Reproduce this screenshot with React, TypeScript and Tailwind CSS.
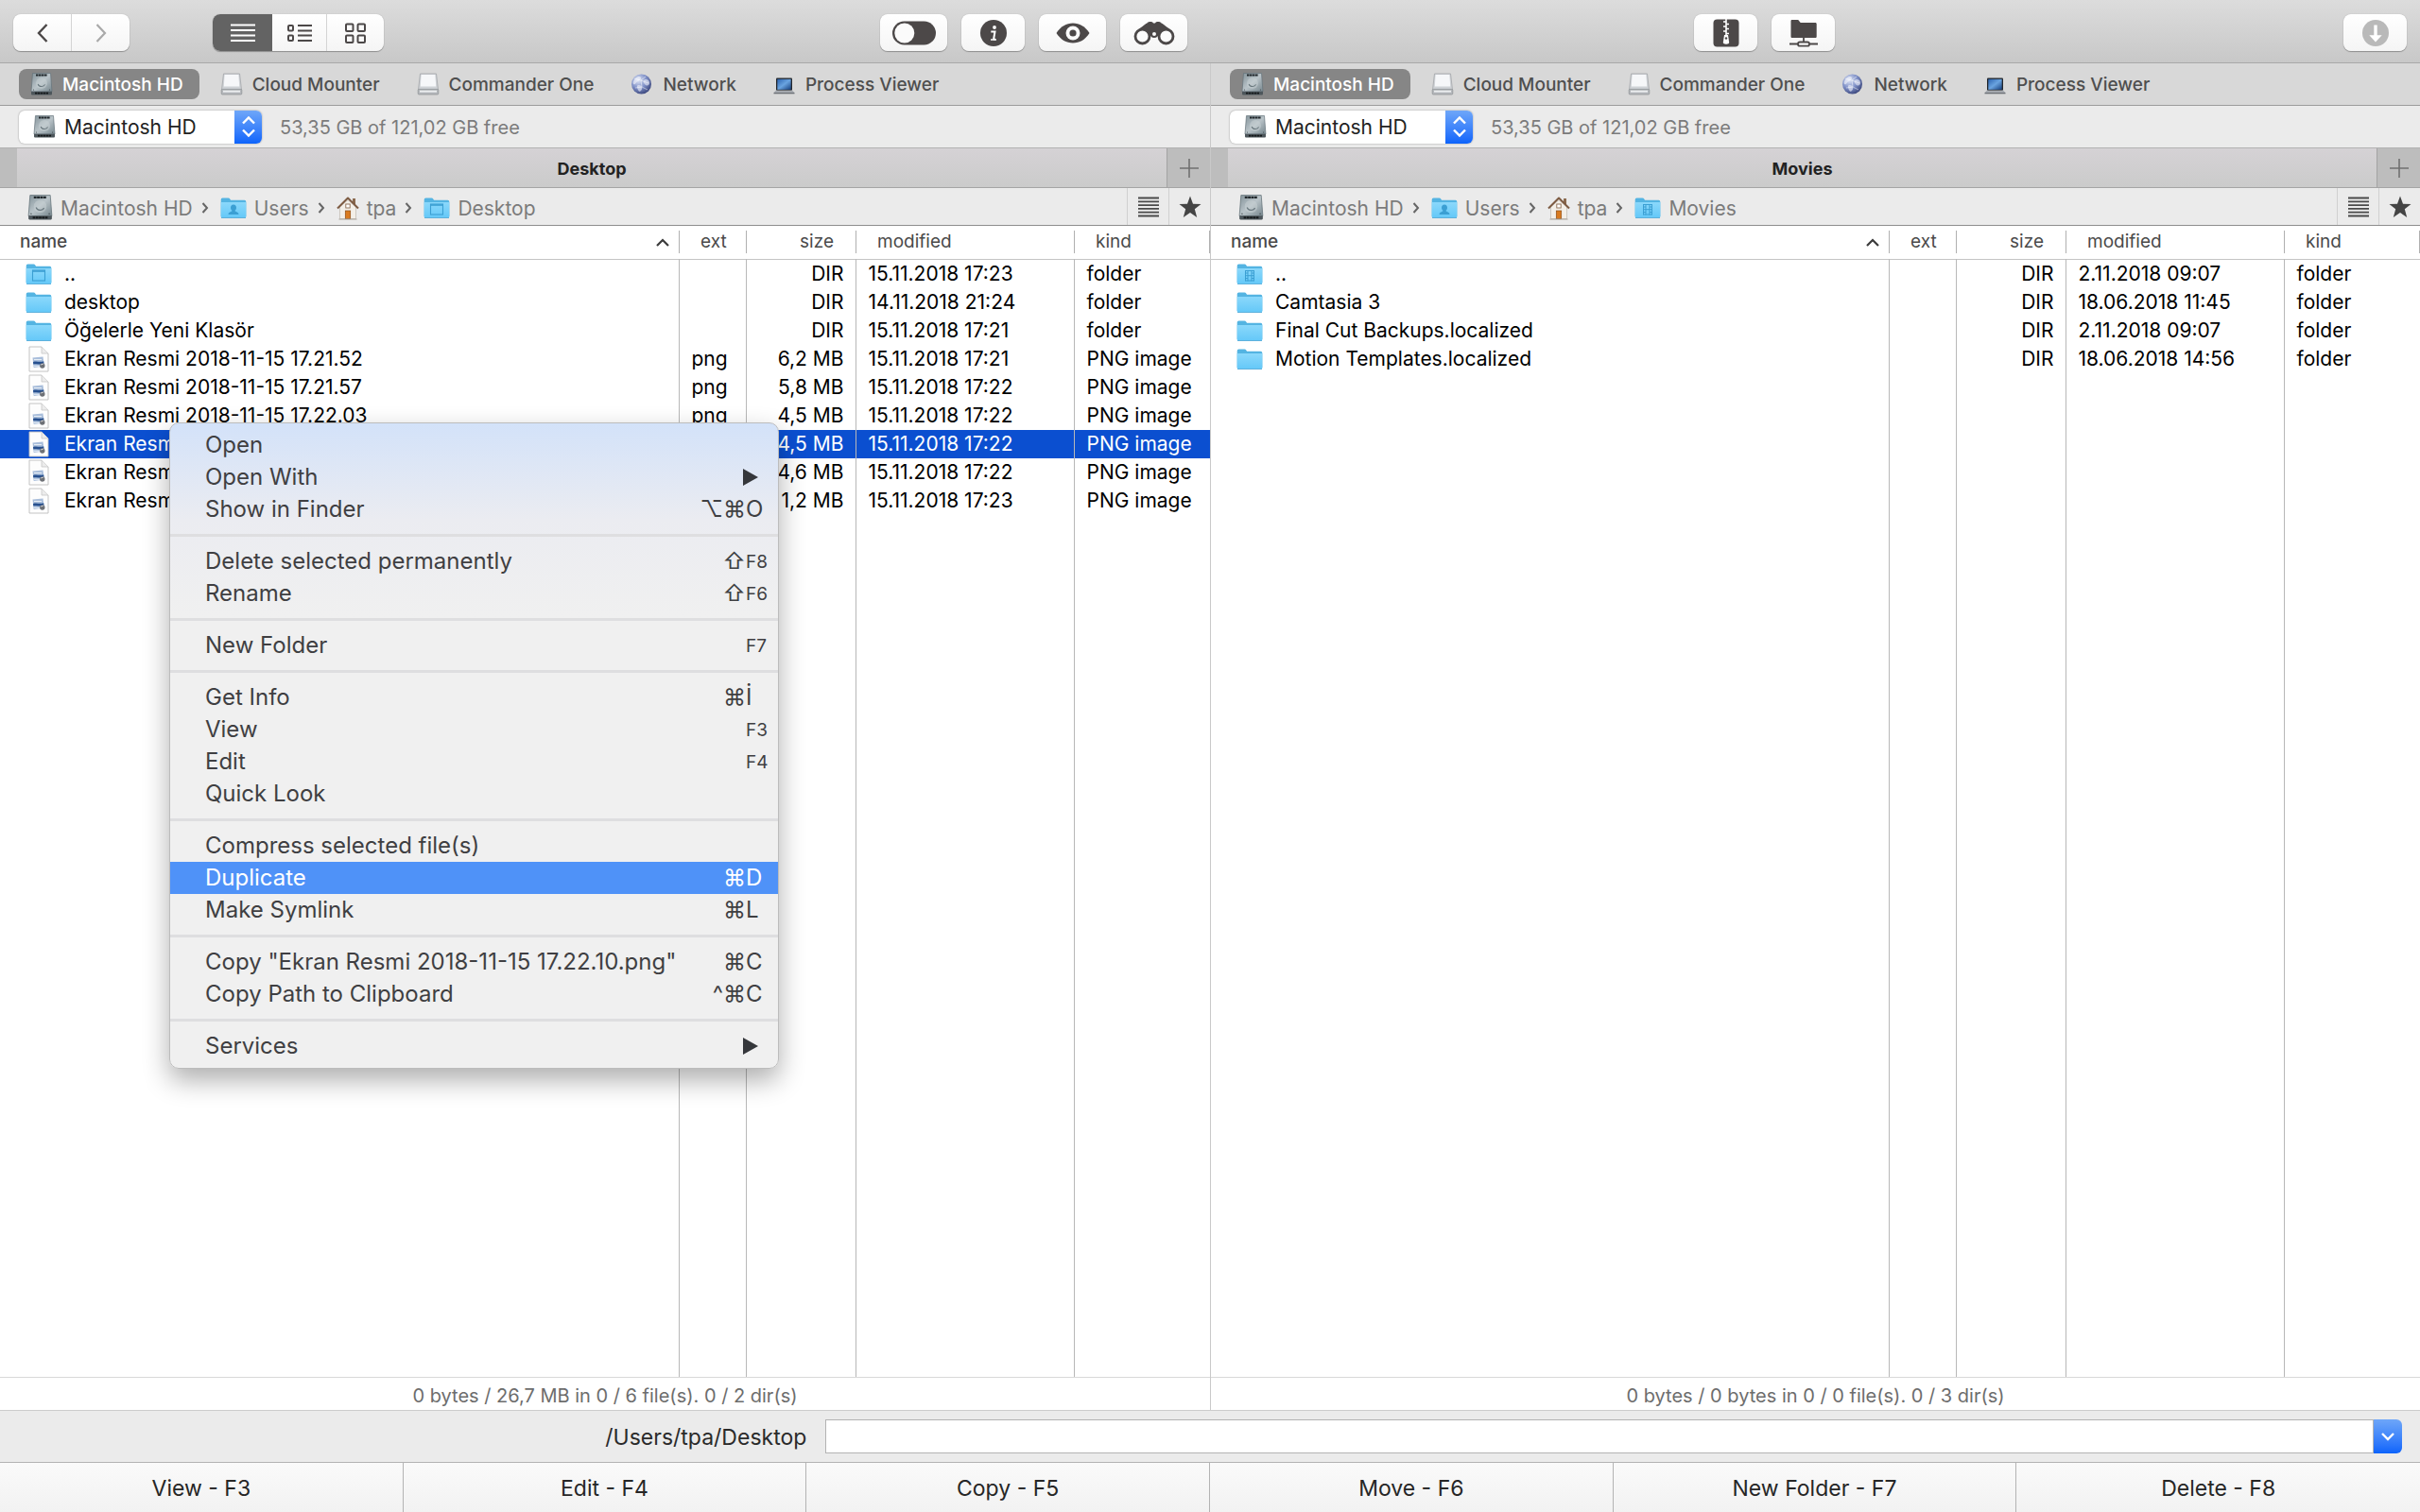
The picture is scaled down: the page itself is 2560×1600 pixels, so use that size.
import { ReactNode } from "react";
import clsx from "clsx";

type FolderKind = "plain" | "user" | "desktop" | "movies";

interface FileRow {
  name: string;
  icon: FolderKind | "png";
  size: string;
  modified: string;
  selected?: boolean;
}

interface Crumb {
  label: string;
  icon: ReactNode;
}

interface MenuEntry {
  label: string;
  mods?: string;
  keyLabel?: string;
  submenu?: boolean;
  active?: boolean;
}

/* ---------- icons ---------- */

const HardDriveIcon = ({ className = "w-6 h-6" }: { className?: string }) => (
  <svg viewBox="0 0 24 24" className={clsx("shrink-0", className)} aria-hidden="true">
    <defs>
      <linearGradient id="hd" x1="0" y1="0" x2="1" y2="1">
        <stop offset="0" stopColor="#84939a" />
        <stop offset="0.5" stopColor="#b9c3c8" />
        <stop offset="1" stopColor="#76868d" />
      </linearGradient>
    </defs>
    <path d="M2.500.5h19L23 20H1z" fill="url(#hd)" stroke="#66747b" strokeWidth="0.7" />
    <path d="M1 19.800h22V22.500a1 1 0 0 1-1 1H2a1 1 0 0 1-1-1z" fill="#4d565b" />
    <path d="M5 21.600h14" stroke="#15191b" strokeWidth="1.800" strokeDasharray="2.400 0.500" />
    <path d="M6 2.600h12" stroke="#20272b" strokeWidth="2" strokeDasharray="2.600 0.400" />
    <circle cx="12" cy="11" r="6" fill="#ccd4d7" opacity="0.45" />
    <path d="M8.200 12c.8 3 6 3.600 7.400.4" fill="none" stroke="#6c7a80" strokeWidth="1.100" />
    <circle cx="3.500" cy="18" r="0.600" fill="#3b4448" />
    <circle cx="20.500" cy="18" r="0.600" fill="#3b4448" />
  </svg>
);

const ExternalDriveIcon = () => (
  <svg viewBox="0 0 24 24" className="w-6 h-6 shrink-0" aria-hidden="true">
    <path d="M3.500 1h17L22.500 18h-21z" fill="#cfd2d6" stroke="#a3a6aa" strokeWidth="0.8" />
    <path d="M4.600 2h14.800l.8 12.500H3.800z" fill="#f6f7f9" />
    <rect x="1.200" y="17.400" width="21.600" height="5.600" rx="1" fill="#b4b7bb" stroke="#8d9094" strokeWidth="0.7" />
    <rect x="3" y="18.800" width="18" height="1.800" fill="#eceef0" />
  </svg>
);

const GlobeIcon = () => (
  <svg viewBox="0 0 24 24" className="w-6 h-6 shrink-0" aria-hidden="true">
    <defs>
      <radialGradient id="globe" cx="0.35" cy="0.3" r="0.8">
        <stop offset="0" stopColor="#dfe6f5" />
        <stop offset="0.5" stopColor="#8091c8" />
        <stop offset="1" stopColor="#2f3a70" />
      </radialGradient>
    </defs>
    <circle cx="11.500" cy="12" r="10.500" fill="url(#globe)" />
    <path
      d="M7 4.500c3-1.500 5 .5 3.600 2.400C9.400 8.500 6.500 9 5.600 11c-.9 2-2.600 1.500-3 0C3 8 5 5.500 7 4.500zM14 8c2-2 5.500-.5 6 2s-1.500 4-3 3.500-4.500-3.500-3-5.500zM8 13c2.500-.5 4.500 1.500 4.200 3.500S10 20.500 9 19.500 5.500 14 8 13z"
      fill="#f1f4fc"
      opacity="0.6"
    />
    <path d="M4 6l7 2 5-4M11 8l1 7 6 3M12 15l-7 1M11 8l8 3" fill="none" stroke="#fff" strokeWidth="0.6" opacity="0.8" />
  </svg>
);

const LaptopIcon = () => (
  <svg viewBox="0 0 24 24" className="w-6 h-6 shrink-0" aria-hidden="true">
    <defs>
      <linearGradient id="screen" x1="0" y1="0" x2="1" y2="1">
        <stop offset="0" stopColor="#2b63b0" />
        <stop offset="0.5" stopColor="#6aa4e0" />
        <stop offset="1" stopColor="#16407f" />
      </linearGradient>
    </defs>
    <rect x="3" y="5.500" width="17" height="13.500" rx="1" fill="#23262b" />
    <rect x="4.300" y="6.800" width="14.400" height="11" fill="url(#screen)" />
    <path d="M3 18.500h17l2.500 2.500H.5z" fill="#a4a8ae" />
    <path d="M.5 21h22v1.300H.5z" fill="#6d7177" />
  </svg>
);

const FolderIcon = ({ kind, className = "w-7 h-6" }: { kind: FolderKind; className?: string }) => (
  <svg viewBox="0 0 28 24" className={clsx("shrink-0", className)} aria-hidden="true">
    <defs>
      <linearGradient id="folder" x1="0" y1="0" x2="0" y2="1">
        <stop offset="0" stopColor="#8bd8fb" />
        <stop offset="1" stopColor="#64c8f8" />
      </linearGradient>
    </defs>
    <path
      d="M.7 3.200A1.700 1.700 0 0 1 2.400 1.500h6.200c.8 0 1.200.3 1.600.9l.9 1.300h14.500a1.700 1.700 0 0 1 1.700 1.700V21H.7z"
      fill="#54b4e2"
    />
    <path d="M.7 6h26.600v15.300a1.200 1.200 0 0 1-1.200 1.200H1.900a1.200 1.200 0 0 1-1.200-1.200z" fill="url(#folder)" />
    <path d="M1 22.500h26" stroke="#4aa5d4" strokeWidth="0.800" />
    {kind === "desktop" && (
      <>
        <rect x="7.500" y="8" width="13" height="11" fill="none" stroke="#3b9fd3" strokeWidth="1.100" />
        <path d="M7.500 9h13" stroke="#3b9fd3" strokeWidth="1.600" />
      </>
    )}
    {kind === "user" && (
      <path
        d="M14 8.500c1.900 0 3 1.400 3 3.200 0 1.300-.6 2.300-1.300 2.900v1c1.500.7 3.800 1.200 3.800 3.400h-11c0-2.200 2.300-2.700 3.800-3.400v-1c-.7-.6-1.300-1.600-1.300-2.900 0-1.800 1.100-3.200 3-3.200z"
        fill="#3b9fd3"
      />
    )}
    {kind === "movies" && (
      <path
        d="M9.500 8v11.500M18.500 8v11.500M12 8v11.500M16 8v11.500M9.500 8.500h9M9.500 11h2.500M16 11h2.500M9.500 13.700h9M9.500 16.500h2.500M16 16.500h2.500M9.500 19h9"
        fill="none"
        stroke="#3b9fd3"
        strokeWidth="1"
      />
    )}
  </svg>
);

const HomeIcon = () => (
  <svg viewBox="0 0 24 26" className="w-6 h-[26px] shrink-0" aria-hidden="true">
    <path d="M17 3h3v6h-3z" fill="#8a6a4f" />
    <path d="M3.500 12L12 4.500 20.500 12v12.500h-17z" fill="#f3efe8" stroke="#b6aea4" strokeWidth="0.600" />
    <path d="M1 13.500L12 2.500 23 13.500" fill="none" stroke="#7d5b42" strokeWidth="2" strokeLinejoin="round" />
    <rect x="9.300" y="16" width="5.400" height="8.500" fill="#d97a1e" stroke="#8c4d13" strokeWidth="0.700" />
    <rect x="9.800" y="9" width="4.400" height="4" fill="#fff" stroke="#8c6a50" strokeWidth="0.900" />
    <path d="M2.500 25h19" stroke="#a9a39a" strokeWidth="1" />
  </svg>
);

const PngIcon = () => (
  <svg viewBox="0 0 22 28" className="w-[22px] h-7 shrink-0" aria-hidden="true">
    <path d="M1 1h13l7 7v19H1z" fill="#fdfdfd" stroke="#bdbdbd" strokeWidth="0.900" />
    <path d="M14 1v7h7" fill="#ececec" stroke="#c6c6c6" strokeWidth="0.800" />
    <path d="M4.500 12.500l11-1 1.200 10-11 1.500z" fill="#a9bedb" />
    <path d="M5 17c4-1.500 7 .8 11.200-.8l.3 2.600c-4 1.800-7-.5-11.200.8z" fill="#27508f" />
    <path d="M6 14.500h8M6 21.300h6" stroke="#e6edf5" strokeWidth="1" />
    <circle cx="14.800" cy="21" r="2.700" fill="#6e7176" />
    <path d="M13 20l3-1" stroke="#d5d6d8" strokeWidth="0.900" />
  </svg>
);

/* ---------- toolbar ---------- */

const INK = "#4c4848";

const ToggleIcon = () => (
  <svg viewBox="0 0 46 26" className="w-[46px] h-[26px]" aria-hidden="true">
    <rect x="0" y="0.500" width="46" height="25" rx="12.500" fill={INK} />
    <circle cx="12.800" cy="13" r="10.500" fill="#fbfbfb" />
  </svg>
);

const InfoIcon = () => (
  <svg viewBox="0 0 28 28" className="w-7 h-7" aria-hidden="true">
    <circle cx="14" cy="14" r="14" fill={INK} />
    <circle cx="15" cy="8" r="1.900" fill="#fff" />
    <path d="M11.300 12.400h4.200l-1.300 7.500c-.1.700.3.900 1.700.5" fill="none" stroke="#fff" strokeWidth="2" />
    <path d="M11 21h6" stroke="#fff" strokeWidth="1.500" />
  </svg>
);

const EyeIcon = () => (
  <svg viewBox="0 0 36 22" className="w-9 h-[22px]" aria-hidden="true">
    <path d="M.5 11C5 4 11 .5 18 .5S31 4 35.500 11C31 18 25 21.500 18 21.500S5 18 .5 11z" fill={INK} />
    <circle cx="18" cy="11" r="7.500" fill="#fbfbfb" />
    <circle cx="18" cy="11" r="3.600" fill={INK} />
  </svg>
);

const BinocularsIcon = () => (
  <svg viewBox="0 0 44 26" className="w-11 h-[26px]" aria-hidden="true">
    <path
      d="M9.500 6C11 4.500 13 3 14.500 2.500 15 .9 20 .3 21 2.500h2C24 .3 29 .9 29.500 2.500 31 3 33 4.500 34.500 6c3 2 5.500 4.500 7.500 8L30 17l-5-1h-6l-5 1L2 14c2-3.500 4.500-6 7.500-8z"
      fill={INK}
    />
    <circle cx="9.500" cy="16.500" r="7.500" fill="#fbfbfb" stroke={INK} strokeWidth="2.800" />
    <circle cx="34.500" cy="16.500" r="7.500" fill="#fbfbfb" stroke={INK} strokeWidth="2.800" />
    <circle cx="22" cy="14" r="3" fill="#fbfbfb" stroke={INK} strokeWidth="2" />
  </svg>
);

const ZipIcon = () => (
  <svg viewBox="0 0 28 30" className="w-7 h-[30px]" aria-hidden="true">
    <rect x="0.500" y="0.500" width="27" height="29" rx="4" fill={INK} />
    <path d="M14 0v17" stroke="#fff" strokeWidth="1.600" />
    <path d="M11 3h3M14 5.500h3M11 8h3M14 10.500h3M11 13h3M14 15.500h3" stroke="#fff" strokeWidth="1.500" />
    <path d="M12 17h4l1.200 8c0 2.300-6.400 2.300-6.400 0z" fill="#fff" />
    <circle cx="14" cy="20.500" r="1.200" fill={INK} />
  </svg>
);

const NetworkFolderIcon = () => (
  <svg viewBox="0 0 30 30" className="w-[30px] h-[30px]" aria-hidden="true">
    <path d="M1.500 2.200C1.500 1.300 2 1 2.800 1h6.400l2.500 3h15.500c1 0 1.500.5 1.500 1.500v13c0 1-.5 1.500-1.500 1.500H3c-1 0-1.500-.5-1.500-1.500z" fill={INK} />
    <path d="M15 20v4.500M0 26.500h9.500M20.500 26.500H30" stroke={INK} strokeWidth="1.800" />
    <rect x="9" y="24.500" width="12" height="4.200" rx="2" fill="none" stroke={INK} strokeWidth="1.800" />
  </svg>
);

const DownloadIcon = () => (
  <svg viewBox="0 0 28 28" className="w-7 h-7" aria-hidden="true">
    <circle cx="14" cy="14" r="14" fill="#b9b9b9" />
    <path d="M12.300 5.500h3.400v10.800h5L14 23.500l-6.700-7.200h5z" fill="#fff" />
  </svg>
);

const ToolButton = ({ label, className, children }: { label: string; className: string; children: ReactNode }) => (
  <button
    aria-label={label}
    className={clsx(
      "h-[39px] flex items-center justify-center rounded-lg bg-linear-to-b from-white to-[#f5f5f5] shadow-[0_1px_1px_rgba(0,0,0,0.28),0_0_1px_rgba(0,0,0,0.3)]",
      className
    )}
  >
    {children}
  </button>
);

const Toolbar = () => (
  <header className="h-[67px] shrink-0 grid grid-cols-2 pb-[11px] pt-[15px] border-b border-[#a8a8a8] bg-linear-to-b from-[#dcdcdc] to-[#c8c8c8]">
    <div className="flex pl-[14px] pr-6">
      <div className="flex h-[39px] rounded-lg overflow-hidden bg-linear-to-b from-white to-[#f5f5f5] shadow-[0_1px_1px_rgba(0,0,0,0.28),0_0_1px_rgba(0,0,0,0.3)]">
        <button aria-label="Back" className="w-[62px] flex items-center justify-center border-r border-[#d4d4d4]">
          <svg viewBox="0 0 12 20" className="w-3 h-5" fill="none" stroke={INK} strokeWidth="2.4" aria-hidden="true">
            <path d="M10.500 1L2 10l8.500 9" />
          </svg>
        </button>
        <button aria-label="Forward" className="w-[61px] flex items-center justify-center">
          <svg viewBox="0 0 12 20" className="w-3 h-5" fill="none" stroke="#a9a9a9" strokeWidth="2.2" aria-hidden="true">
            <path d="M1.500 1L10 10l-8.500 9" />
          </svg>
        </button>
      </div>
      <div className="flex h-[39px] ml-[88px] rounded-lg overflow-hidden bg-linear-to-b from-white to-[#f5f5f5] shadow-[0_1px_1px_rgba(0,0,0,0.28),0_0_1px_rgba(0,0,0,0.3)]">
        <button aria-label="Full view" className="w-[63px] flex items-center justify-center bg-[#636363]">
          <svg viewBox="0 0 26 20" className="w-[26px] h-5" stroke="#fff" strokeWidth="2" aria-hidden="true">
            <path d="M0 1.500h26M0 7h26M0 12.500h26M0 18h26" />
          </svg>
        </button>
        <button aria-label="Brief view" className="w-[58px] flex items-center justify-center border-r border-[#d4d4d4]">
          <svg viewBox="0 0 26 20" className="w-[26px] h-5" fill="none" stroke={INK} strokeWidth="2" aria-hidden="true">
            <rect x="1" y="2" width="5" height="5.500" rx="1" />
            <rect x="1" y="12.500" width="5" height="5.500" rx="1" />
            <path d="M11 2h15M11 7.500h15M11 12.500h15M11 18h15" />
          </svg>
        </button>
        <button aria-label="Icon view" className="w-[60px] flex items-center justify-center">
          <svg viewBox="0 0 22 22" className="w-[22px] h-[22px]" fill="none" stroke={INK} strokeWidth="2" aria-hidden="true">
            <rect x="1" y="1.500" width="7.500" height="7.500" rx="1" />
            <rect x="13.500" y="1.500" width="7.500" height="7.500" rx="1" />
            <rect x="1" y="13.500" width="7.500" height="7.500" rx="1" />
            <rect x="13.500" y="13.500" width="7.500" height="7.500" rx="1" />
          </svg>
        </button>
      </div>
      <div className="ml-auto flex gap-[15px]">
        <ToolButton label="Show hidden files" className="w-[71px]">
          <ToggleIcon />
        </ToolButton>
        <ToolButton label="Info" className="w-[67px]">
          <InfoIcon />
        </ToolButton>
        <ToolButton label="Quick look" className="w-[71px]">
          <EyeIcon />
        </ToolButton>
        <ToolButton label="Search" className="w-[71px]">
          <BinocularsIcon />
        </ToolButton>
      </div>
    </div>
    <div className="flex gap-[15px] pl-[40%] pr-[14px]">
      <ToolButton label="Compress" className="w-[67px]">
        <ZipIcon />
      </ToolButton>
      <ToolButton label="Connect to server" className="w-[67px]">
        <NetworkFolderIcon />
      </ToolButton>
      <ToolButton label="Downloads" className="w-[67px] ml-auto">
        <DownloadIcon />
      </ToolButton>
    </div>
  </header>
);

/* ---------- panels ---------- */

const favorites = [
  { label: "Cloud Mounter", icon: <ExternalDriveIcon /> },
  { label: "Commander One", icon: <ExternalDriveIcon /> },
  { label: "Network", icon: <GlobeIcon /> },
  { label: "Process Viewer", icon: <LaptopIcon /> },
];

const columns = [
  { label: "ext", width: "w-[71px]", inner: "pl-[22px] text-left" },
  { label: "size", width: "w-[116px]", inner: "pr-[23px] text-right" },
  { label: "modified", width: "w-[231px]", inner: "pl-[22px] text-left" },
  { label: "kind", width: "w-[144px]", inner: "pl-[22px] text-left border-r" },
];

const cell = "border-l border-[#b8b8b8] whitespace-nowrap";

interface PanelProps {
  side: "left" | "right";
  title: string;
  crumbs: Crumb[];
  rows: FileRow[];
  status: string;
}

const Panel = ({ side, title, crumbs, rows, status }: PanelProps) => (
  <section
    aria-label={title}
    className={clsx("flex flex-col min-w-0", side === "right" && "border-l border-[#c9c9c9]")}
  >
    <nav className="h-[45px] shrink-0 flex items-center pl-5 border-b border-[#9c9c9c] bg-[#d8d8d8] text-[19px] font-medium text-[#4f4f4f]">
      <button className="h-8 flex items-center gap-[10px] pl-3 pr-[17px] rounded-lg bg-[#868686] text-white">
        <HardDriveIcon />
        <span className="pt-[2px]">Macintosh HD</span>
      </button>
      {favorites.map((item) => (
        <button key={item.label} className="h-8 flex items-center gap-[10px] pl-[22px] pr-[17px]">
          {item.icon}
          <span className="pt-[2px]">{item.label}</span>
        </button>
      ))}
    </nav>

    <div className="h-[45px] shrink-0 flex items-center pl-5 border-b border-[#b2b2b2] bg-[#ebebeb]">
      <div className="relative w-[257px] h-[35px] rounded-md overflow-hidden bg-white shadow-[0_0_2px_rgba(0,0,0,0.4)]">
        <select
          id={`drive-${side}`}
          aria-label="Drive"
          className="appearance-none w-full h-full pl-12 pr-8 text-[21px] leading-[35px] text-[#222]"
        >
          <option>Macintosh HD</option>
        </select>
        <label htmlFor={`drive-${side}`} className="absolute inset-y-0 left-[15px] flex items-center">
          <HardDriveIcon />
        </label>
        <span className="absolute inset-y-0 right-0 w-[29px] flex items-center justify-center pointer-events-none bg-linear-to-b from-[#6ea6f8] to-[#0b63fb]">
          <svg viewBox="0 0 14 24" className="w-[14px] h-6" fill="none" stroke="#fff" strokeWidth="2.4" aria-hidden="true">
            <path d="M1 8.500L7 2.500l6 6M1 15.500l6 6 6-6" />
          </svg>
        </span>
      </div>
      <p className="ml-[19px] pt-[2px] text-[20px] text-[#7b7b7b]">53,35 GB of 121,02 GB free</p>
    </div>

    <div className="h-[42px] shrink-0 flex border-b border-[#a5a5a5] bg-[#bdbdbd]">
      <button className="flex-1 ml-[18px] pt-px bg-linear-to-b from-[#d5d2d5] to-[#cbcbcb] text-[18px] font-bold text-[#222]">
        {title}
      </button>
      <button aria-label="New tab" className="w-[46px] flex items-center justify-center border-l border-[#a3a3a3]">
        <svg viewBox="0 0 20 20" className="w-5 h-5" stroke="#707070" strokeWidth="1.6" aria-hidden="true">
          <path d="M10 0v20M0 10h20" />
        </svg>
      </button>
    </div>

    <div className="h-10 shrink-0 flex items-center pl-[29px] border-b border-[#8e8e8e] bg-[#ebebeb] text-[21px] text-[#7b7b7b]">
      {crumbs.map((crumb, index) => (
        <div key={crumb.label} className="flex items-center pt-[2px]">
          {index > 0 && (
            <svg viewBox="0 0 8 12" className="w-2 h-3 ml-[9px] mr-3" fill="none" stroke="#666" strokeWidth="2" aria-hidden="true">
              <path d="M1.500 1L6 6l-4.500 5" />
            </svg>
          )}
          <a href="#" className="flex items-center gap-2">
            {crumb.icon}
            <span className="pt-[2px]">{crumb.label}</span>
          </a>
        </div>
      ))}
      <button aria-label="History" className="ml-auto w-11 self-stretch flex items-center justify-center border-l border-[#d0d0d0]">
        <svg viewBox="0 0 22 22" className="w-[22px] h-[22px]" stroke="#4a4a4a" strokeWidth="1.8" aria-hidden="true">
          <path d="M0 1.500h22M0 5.300h22M0 9.100h22M0 12.900h22M0 16.700h22M0 20.500h22" />
        </svg>
      </button>
      <button aria-label="Favorites" className="w-11 self-stretch flex items-center justify-center border-l border-[#d0d0d0]">
        <svg viewBox="0 0 24 24" className="w-6 h-6" fill="#444" aria-hidden="true">
          <path d="M12 .5l3 8.200 8.500.3-6.700 5.300 2.400 8.700L12 18l-7.200 5 2.400-8.700L.5 9 9 8.700z" />
        </svg>
      </button>
    </div>

    <div className="flex-1 min-h-0 bg-white">
      <table className="w-full h-full table-fixed border-collapse text-[21px] leading-[30px] text-black">
        <thead>
          <tr className="h-[35px] border-b border-[#c4c4c4] text-[19px] leading-6 text-[#4a4a4a]">
            <th className="p-0 font-medium">
              <div className="flex items-center justify-between pl-[21px] pr-[10px]">
                name
                <svg viewBox="0 0 14 9" className="w-[14px] h-[9px]" fill="none" stroke="#3c3c3c" strokeWidth="2.2" aria-hidden="true">
                  <path d="M1 8l6-6 6 6" />
                </svg>
              </div>
            </th>
            {columns.map((column) => (
              <th key={column.label} className={clsx("p-0 font-normal", column.width)}>
                <div className={clsx("border-l border-[#b0b0b0]", column.inner)}>{column.label}</div>
              </th>
            ))}
          </tr>
        </thead>
        <tbody>
          {rows.map((row) => {
            const isPng = row.icon === "png";
            return (
              <tr key={row.name} className={clsx("h-[30px]", row.selected && "bg-[#0b4fd0] text-white")}>
                <td className="p-0">
                  <div className="h-[30px] flex items-center pl-[27px] whitespace-nowrap">
                    <span className="w-[41px] flex">
                      {row.icon === "png" ? (
                        <span className="pl-[3px]">
                          <PngIcon />
                        </span>
                      ) : (
                        <FolderIcon kind={row.icon} />
                      )}
                    </span>
                    {row.name}
                  </div>
                </td>
                <td className={clsx(cell, "p-0 pl-[13px]")}>{isPng && "png"}</td>
                <td className={clsx(cell, "p-0 pr-3 text-right")}>{row.size}</td>
                <td className={clsx(cell, "p-0 pl-[13px]")}>{row.modified}</td>
                <td className={clsx(cell, "p-0 pl-[13px]")}>{isPng ? "PNG image" : "folder"}</td>
              </tr>
            );
          })}
          {/* column rules run on below the last file */}
          <tr aria-hidden="true">
            <td />
            <td className={cell} />
            <td className={cell} />
            <td className={cell} />
            <td className={cell} />
          </tr>
        </tbody>
      </table>
    </div>

    <p className="h-[35px] shrink-0 pt-[2px] border-t border-[#d9d9d9] bg-white text-center text-[20px] leading-[34px] text-[#6d6d6d]">
      {status}
    </p>
  </section>
);

/* ---------- context menu ---------- */

const menuGroups: MenuEntry[][] = [
  [
    { label: "Open" },
    { label: "Open With", submenu: true },
    { label: "Show in Finder", mods: "⌥⌘", keyLabel: "O" },
  ],
  [
    { label: "Delete selected permanently", mods: "⇧", keyLabel: "F8" },
    { label: "Rename", mods: "⇧", keyLabel: "F6" },
  ],
  [{ label: "New Folder", keyLabel: "F7" }],
  [
    { label: "Get Info", mods: "⌘", keyLabel: "İ" },
    { label: "View", keyLabel: "F3" },
    { label: "Edit", keyLabel: "F4" },
    { label: "Quick Look" },
  ],
  [
    { label: "Compress selected file(s)" },
    { label: "Duplicate", mods: "⌘", keyLabel: "D", active: true },
    { label: "Make Symlink", mods: "⌘", keyLabel: "L" },
  ],
  [
    { label: 'Copy "Ekran Resmi 2018-11-15 17.22.10.png"', mods: "⌘", keyLabel: "C" },
    { label: "Copy Path to Clipboard", mods: "^⌘", keyLabel: "C" },
  ],
  [{ label: "Services", submenu: true }],
];

const ContextMenu = () => (
  <div
    role="menu"
    className="absolute left-[179px] top-[447px] w-[645px] py-[6px] rounded-[10px] border border-[#bcbcbc] bg-linear-to-b from-[#d3e2f9] via-[#ebecf1] via-15% to-[#f0f0f0] to-30% shadow-[0_12px_28px_rgba(0,0,0,0.32)] text-[24px] leading-[34px] text-[#3f3f42]"
  >
    {menuGroups.map((group, index) => (
      <div key={index}>
        {index > 0 && <hr className="my-[9px] h-[3px] border-0 bg-[#dedee0]" />}
        {group.map((entry) => (
          <button
            key={entry.label}
            role="menuitem"
            className={clsx("w-full h-[34px] pl-[37px] flex items-center text-left", entry.active && "bg-[#4f92f8] text-white")}
          >
            <span className="flex-1 whitespace-nowrap">{entry.label}</span>
            {entry.mods && <span>{entry.mods}</span>}
            {entry.keyLabel && (
              <span className={clsx("w-[34px]", entry.keyLabel.length > 1 && "pt-[2px] text-[19px]")}>{entry.keyLabel}</span>
            )}
            {entry.submenu && (
              <svg viewBox="0 0 16 18" className="w-4 h-[18px] mr-[21px]" fill="#35373b" aria-hidden="true">
                <path d="M0 0l16 9-16 9z" />
              </svg>
            )}
          </button>
        ))}
      </div>
    ))}
  </div>
);

/* ---------- data ---------- */

const baseCrumbs: Crumb[] = [
  { label: "Macintosh HD", icon: <HardDriveIcon className="w-[27px] h-[27px]" /> },
  { label: "Users", icon: <FolderIcon kind="user" /> },
  { label: "tpa", icon: <HomeIcon /> },
];

const leftRows: FileRow[] = [
  { name: "..", icon: "desktop", size: "DIR", modified: "15.11.2018 17:23" },
  { name: "desktop", icon: "plain", size: "DIR", modified: "14.11.2018 21:24" },
  { name: "Öğelerle Yeni Klasör", icon: "plain", size: "DIR", modified: "15.11.2018 17:21" },
  { name: "Ekran Resmi 2018-11-15 17.21.52", icon: "png", size: "6,2 MB", modified: "15.11.2018 17:21" },
  { name: "Ekran Resmi 2018-11-15 17.21.57", icon: "png", size: "5,8 MB", modified: "15.11.2018 17:22" },
  { name: "Ekran Resmi 2018-11-15 17.22.03", icon: "png", size: "4,5 MB", modified: "15.11.2018 17:22" },
  { name: "Ekran Resmi 2018-11-15 17.22.10", icon: "png", size: "4,5 MB", modified: "15.11.2018 17:22", selected: true },
  { name: "Ekran Resmi 2018-11-15 17.22.15", icon: "png", size: "4,6 MB", modified: "15.11.2018 17:22" },
  { name: "Ekran Resmi 2018-11-15 17.23.02", icon: "png", size: "1,2 MB", modified: "15.11.2018 17:23" },
];

const rightRows: FileRow[] = [
  { name: "..", icon: "movies", size: "DIR", modified: "2.11.2018 09:07" },
  { name: "Camtasia 3", icon: "plain", size: "DIR", modified: "18.06.2018 11:45" },
  { name: "Final Cut Backups.localized", icon: "plain", size: "DIR", modified: "2.11.2018 09:07" },
  { name: "Motion Templates.localized", icon: "plain", size: "DIR", modified: "18.06.2018 14:56" },
];

const actions = ["View - F3", "Edit - F4", "Copy - F5", "Move - F6", "New Folder - F7", "Delete - F8"];

const App = () => {
  return (
    <div className="relative h-screen flex flex-col overflow-hidden bg-[#ebebeb] font-[Inter,'DejaVu_Sans',sans-serif]">
      <Toolbar />

      <main className="flex-1 min-h-0 grid grid-cols-2">
        <Panel
          side="left"
          title="Desktop"
          crumbs={[...baseCrumbs, { label: "Desktop", icon: <FolderIcon kind="desktop" /> }]}
          rows={leftRows}
          status="0 bytes / 26,7 MB in 0 / 6 file(s). 0 / 2 dir(s)"
        />
        <Panel
          side="right"
          title="Movies"
          crumbs={[...baseCrumbs, { label: "Movies", icon: <FolderIcon kind="movies" /> }]}
          rows={rightRows}
          status="0 bytes / 0 bytes in 0 / 0 file(s). 0 / 3 dir(s)"
        />
      </main>

      <div className="h-[55px] shrink-0 flex items-center border-t border-[#cccccc]">
        <label htmlFor="command" className="w-1/3 pt-[3px] text-right text-[23px] text-[#2a2a2a]">
          /Users/tpa/Desktop
        </label>
        <input id="command" type="text" className="flex-1 h-9 ml-5 px-2 border border-[#b3b3b3] bg-white text-[22px] outline-none" />
        <button
          aria-label="Command history"
          className="w-[30px] h-9 mr-[19px] flex items-center justify-center rounded-r-md bg-linear-to-b from-[#6ea6f8] to-[#0b63fb]"
        >
          <svg viewBox="0 0 14 9" className="w-[14px] h-[9px]" fill="none" stroke="#fff" strokeWidth="2.4" aria-hidden="true">
            <path d="M1 1l6 6 6-6" />
          </svg>
        </button>
      </div>

      <footer className="h-[53px] shrink-0 grid grid-cols-6 divide-x divide-[#b3b3b3] border-t border-[#b3b3b3] bg-linear-to-b from-[#fafafa] to-[#f2f2f2] text-[23px] text-[#262626]">
        {actions.map((action) => (
          <button key={action} className="pt-[3px]">
            {action}
          </button>
        ))}
      </footer>

      <ContextMenu />
    </div>
  );
};

export default App;
